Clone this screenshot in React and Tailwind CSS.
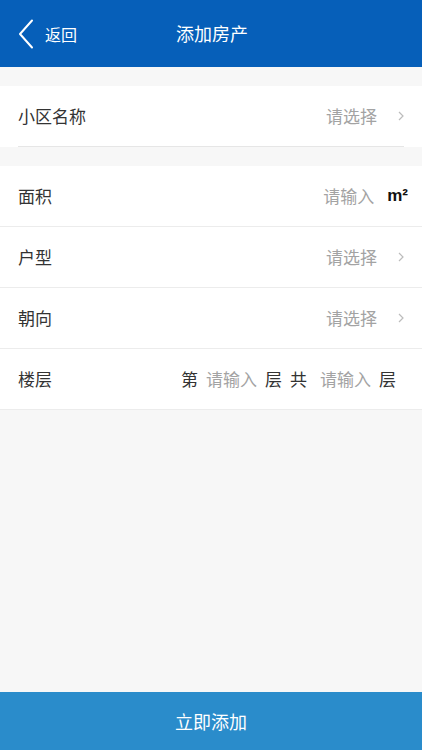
import React from "react";

const font = { fontFamily: '"Noto Sans CJK SC", "Noto Sans", sans-serif' };

function Chevron() {
  return (
    <svg width="6" height="10" viewBox="0 0 6 10" className="ml-[21px]">
      <path d="M1 1 L5 5 L1 9" fill="none" stroke="#bcbcbc" strokeWidth="1.2" />
    </svg>
  );
}

function SelectRow({ label, border }) {
  return (
    <div className={`flex items-center justify-between h-[61px] pl-[18px] pr-[18px] bg-white ${border ? "border-b border-[#ececec]" : ""}`}>
      <span className="text-[17px] text-[#333]">{label}</span>
      <div className="flex items-center">
        <span className="text-[17px] text-[#a3a3a3]">请选择</span>
        <Chevron />
      </div>
    </div>
  );
}

export default function App() {
  return (
    <div style={font} className="w-[422px] h-[750px] bg-[#f7f7f7] flex flex-col overflow-hidden">
      <div className="h-[67px] bg-[#065fb9] flex items-center relative shrink-0">
        <div className="flex items-center pl-[18px]">
          <svg width="16" height="30" viewBox="0 0 16 30">
            <path d="M14 1.5 L2 15 L14 28.5" fill="none" stroke="#fff" strokeWidth="2" strokeLinecap="round" strokeLinejoin="round" />
          </svg>
          <span className="ml-[11px] text-[16px] text-white">返回</span>
        </div>
        <div className="absolute left-0 right-0 top-0 h-[67px] flex items-center justify-center pointer-events-none">
          <span className="text-[18px] text-white ml-[2px]">添加房产</span>
        </div>
      </div>

      <div className="h-[19px] shrink-0" />

      <div className="bg-white shrink-0">
        <div className="flex items-center justify-between h-[60px] pl-[18px] pr-[18px]">
          <span className="text-[17px] text-[#333]">小区名称</span>
          <div className="flex items-center">
            <span className="text-[17px] text-[#a3a3a3]">请选择</span>
            <Chevron />
          </div>
        </div>
        <div className="mx-[18px] h-px bg-[#e6e6e6]" />
      </div>

      <div className="h-[19px] shrink-0" />

      <div className="bg-white shrink-0 border-b border-[#ececec]">
        <div className="flex items-center justify-between h-[61px] pl-[18px] pr-[14px] border-b border-[#ececec]">
          <span className="text-[17px] text-[#333]">面积</span>
          <div className="flex items-center">
            <span className="text-[17px] text-[#a3a3a3]">请输入</span>
            <span className="ml-[13px] text-[17px] font-semibold text-[#111]" style={{ fontFamily: '"Liberation Sans", sans-serif' }}>m²</span>
          </div>
        </div>
        <SelectRow label="户型" border />
        <SelectRow label="朝向" border />
        <div className="flex items-center justify-between h-[60px] pl-[18px] pr-[26px]">
          <span className="text-[17px] text-[#333]">楼层</span>
          <div className="flex items-center text-[17px] gap-[8px]">
            <span className="text-[#333]">第</span>
            <span className="text-[#a3a3a3]">请输入</span>
            <span className="text-[#333]">层</span>
            <span className="text-[#333]">共</span>
            <span className="text-[#a3a3a3] ml-[5px]">请输入</span>
            <span className="text-[#333]">层</span>
          </div>
        </div>
      </div>

      <div className="flex-1" />

      <button className="h-[58px] shrink-0 bg-[#2a8ccb] text-white text-[18px] flex items-center justify-center">
        立即添加
      </button>
    </div>
  );
}
